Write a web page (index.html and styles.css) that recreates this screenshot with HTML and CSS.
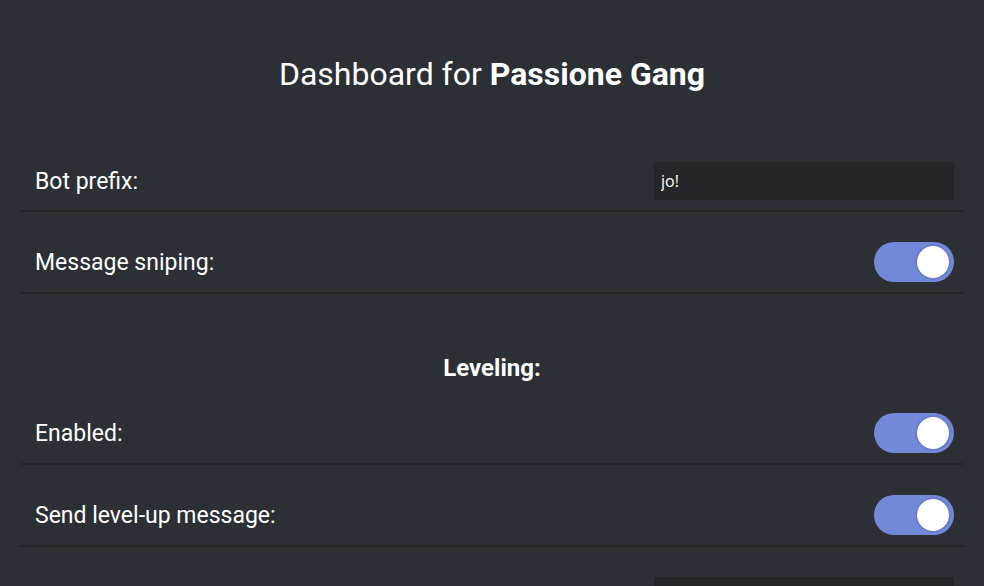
FILE: index.html
```html
<!DOCTYPE html>
<html lang="en">
<head>
<meta charset="utf-8">
<title>Dashboard for Passione Gang</title>
<link rel="stylesheet" href="styles.css">
</head>
<body>
<main class="dashboard">
  <h1 class="title">Dashboard for <b>Passione Gang</b></h1>

  <div class="setting">
    <label class="setting-label" for="prefix">Bot prefix:</label>
    <input class="text-input" id="prefix" type="text" value="jo!">
  </div>

  <div class="setting">
    <span class="setting-label">Message sniping:</span>
    <span class="toggle on"><span class="knob"></span></span>
  </div>

  <h2 class="section-title">Leveling:</h2>

  <div class="setting">
    <span class="setting-label">Enabled:</span>
    <span class="toggle on"><span class="knob"></span></span>
  </div>

  <div class="setting">
    <span class="setting-label">Send level-up message:</span>
    <span class="toggle on"><span class="knob"></span></span>
  </div>

  <div class="setting">
    <span class="setting-label"></span>
    <input class="text-input" type="text" value="" aria-label="Level-up message">
  </div>
</main>
</body>
</html>
```

FILE: styles.css
```css
html, body {
  margin: 0;
  padding: 0;
  background: #2c2f33;
  overflow: hidden;
}

body {
  font-family: Roboto, "Liberation Sans", sans-serif;
  color: #ffffff;
}

.dashboard {
  display: flex;
  flex-direction: column;
  padding: 55px 20px 40px;
}

.title {
  margin: 0 0 39px;
  font-size: 32px;
  line-height: 38px;
  font-weight: 400;
  text-align: center;
}

.title b {
  font-weight: 700;
}

.section-title {
  margin: 61px 0 2px;
  font-size: 24px;
  line-height: 26px;
  font-weight: 700;
  text-align: center;
}

.setting {
  display: flex;
  align-items: center;
  justify-content: space-between;
  margin-top: 20px;
  padding: 10px 10px 10px 15px;
  border-bottom: 2px solid #23272a;
}

.setting-label {
  padding-top: 2px;
  font-size: 23px;
  line-height: 26px;
}

.text-input {
  box-sizing: border-box;
  width: 300px;
  height: 38px;
  padding: 0 7px;
  border: none;
  border-radius: 3px;
  background: #23272a;
  color: #ffffff;
  font-family: "Open Sans", Roboto, sans-serif;
  font-size: 16px;
  outline: none;
}

.toggle {
  position: relative;
  display: block;
  width: 80px;
  height: 40px;
  border-radius: 20px;
  background: #72767d;
}

.toggle.on {
  background: #7289da;
}

.knob {
  position: absolute;
  top: 4px;
  left: 4px;
  width: 32px;
  height: 32px;
  border-radius: 50%;
  background: #ffffff;
  box-shadow: 0 0 3px rgba(0, 0, 0, 0.35);
}

.toggle.on .knob {
  left: auto;
  right: 5px;
}
```
